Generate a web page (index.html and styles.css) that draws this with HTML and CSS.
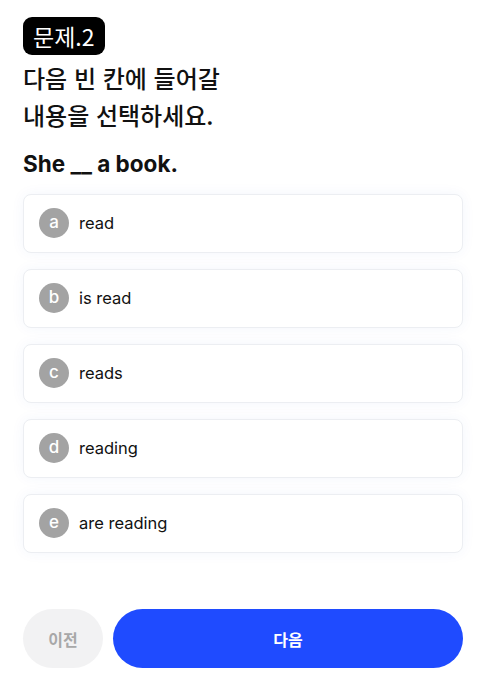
FILE: index.html
```html
<!DOCTYPE html>
<html lang="ko">
<head>
<meta charset="utf-8">
<link rel="stylesheet" href="styles.css">
</head>
<body>
<main class="quiz">
  <span class="badge">문제.2</span>
  <h1 class="title">다음 빈 칸에 들어갈<br>내용을 선택하세요.</h1>
  <p class="sentence">She __ a book.</p>
  <ul class="options">
    <li class="option"><span class="mark">a</span><span class="label">read</span></li>
    <li class="option"><span class="mark">b</span><span class="label">is read</span></li>
    <li class="option"><span class="mark">c</span><span class="label">reads</span></li>
    <li class="option"><span class="mark">d</span><span class="label">reading</span></li>
    <li class="option"><span class="mark">e</span><span class="label">are reading</span></li>
  </ul>
  <div class="actions">
    <button class="btn prev">이전</button>
    <button class="btn next">다음</button>
  </div>
</main>
</body>
</html>
```
FILE: styles.css
```css
* { box-sizing: border-box; }
html, body { margin: 0; padding: 0; background: #fff; }
body {
  font-family: Inter, "Noto Sans CJK KR", sans-serif;
  color: #111;
}
.quiz {
  padding: 17px 22px 0 23px;
  display: flex;
  flex-direction: column;
}
.badge {
  align-self: flex-start;
  background: #000;
  color: #fff;
  font-size: 23px;
  line-height: 38px;
  height: 38px;
  padding: 0 10px;
  border-radius: 9px;
  font-family: "Noto Sans CJK KR", Inter, sans-serif;
  font-weight: 400;
}
.title {
  margin: 4px 0 0;
  font-family: "Noto Sans CJK KR", sans-serif;
  font-size: 24px;
  font-weight: 500;
  line-height: 37px;
  color: #111;
}
.sentence {
  margin: 17px 0 0;
  font-size: 22.5px;
  font-weight: 700;
  line-height: 28px;
  color: #111;
}
.options {
  list-style: none;
  margin: 16px 0 0;
  padding: 0;
  display: flex;
  flex-direction: column;
  gap: 16px;
}
.option {
  height: 59px;
  background: #fff;
  border: 1px solid #eceef2;
  border-radius: 8px;
  box-shadow: 0 0 14px rgba(40, 70, 200, 0.05);
  display: flex;
  align-items: center;
  padding: 0 15px 2px;
  gap: 10px;
}
.mark {
  width: 30px;
  height: 30px;
  border-radius: 50%;
  background: #a3a3a3;
  color: #fff;
  font-size: 17px;
  font-weight: 500;
  display: flex;
  align-items: center;
  justify-content: center;
  line-height: 1;
}
.label {
  font-size: 16.5px;
  color: #111;
}
.actions {
  display: flex;
  gap: 10px;
  margin-top: 56px;
}
.btn {
  border: none;
  height: 59px;
  border-radius: 30px;
  font-family: "Noto Sans CJK KR", sans-serif;
  font-size: 16px;
  font-weight: 700;
}
.prev {
  width: 80px;
  background: #f2f2f3;
  color: #a8a8a8;
}
.next {
  flex: 1;
  background: #1f4bff;
  color: #fff;
}
```
